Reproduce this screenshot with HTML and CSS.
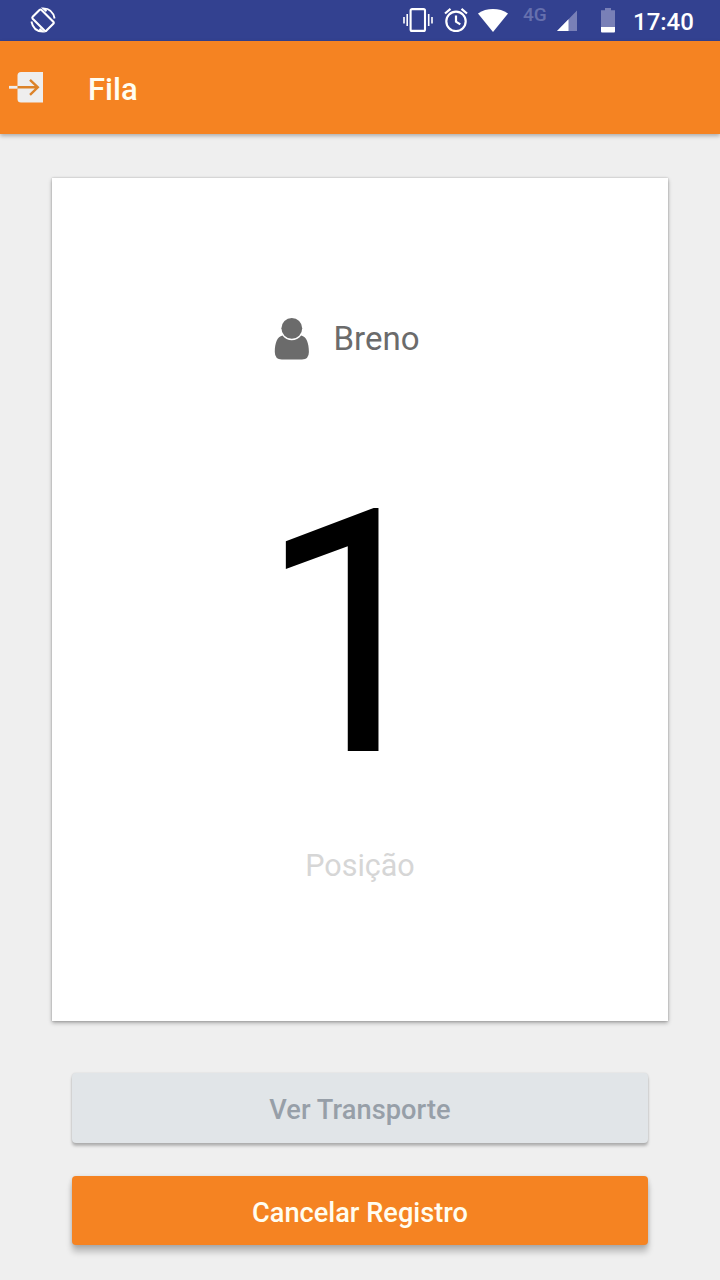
FILE: index.html
```html
<!DOCTYPE html>
<html lang="pt-BR">
<head>
<meta charset="utf-8">
<title>Fila</title>
<link rel="stylesheet" href="styles.css">
</head>
<body>
<div class="screen">
  <div class="status">
    <svg class="rotate" width="26" height="26" viewBox="0 0 26 26" fill="none" stroke="#fff" stroke-width="2.100">
      <path d="M2.700 9.800 9.500 3Q10.500 2 11.500 3L23.300 14.800Q24.300 15.800 23.300 16.800L16.500 23.600Q15.500 24.500 14.500 23.500L2.700 11.800Q1.800 10.800 2.700 9.800Z"/>
      <path stroke-width="1.900" d="M16.500 4.300 13.300 1.400Q22.500 1.500 24.600 11.500M9.500 21.700 12.700 24.600Q3.500 24.500 1.400 14.500"/>
    </svg>
    <div class="status-icons">
      <svg width="30" height="26" viewBox="0 0 30 26" fill="none" stroke="#fff">
        <rect x="7.600" y="2.100" width="14.400" height="21.800" rx="1.500" stroke-width="2.100"/>
        <path stroke-width="1.600" d="M4.200 7V19M1 10V16.500M25.700 7V19M29 10V16.500"/>
      </svg>
      <svg class="alarm" width="26" height="26" viewBox="0 0 26 26" fill="none" stroke="#fff" stroke-width="2.200">
        <circle cx="13" cy="14.300" r="9.700"/>
        <path d="M13 8.500V14.700L17.300 17.400M2 6.500 7.500 1.900M18.500 1.900 24 6.500"/>
      </svg>
      <svg class="wifi" width="32" height="26" viewBox="0 0 32 26"><path fill="#fff" d="M1 6.500C9.500 .6 22.500 .6 31 6.500L16 25Z"/></svg>
      <span class="network">4G</span>
      <svg class="signal" width="21" height="26" viewBox="0 0 21 26"><path fill="#7980b7" d="M20 3.500V24H0Z"/><path fill="#fff" d="M11.500 12.300V24H0Z"/></svg>
      <svg class="battery" width="14" height="26" viewBox="0 0 14 26"><path fill="#7980b7" d="M4 1H10V3.200H14V20H0V3.200H4Z"/><path fill="#fff" d="M0 20H14V24.500Q14 25.500 13 25.500H1Q0 25.500 0 24.500Z"/></svg>
      <span class="clock">17:40</span>
    </div>
  </div>
  <header class="bar">
    <svg class="exit" width="36" height="32" viewBox="0 0 36 32">
      <path fill="#eee" d="M12 1H34V31.500H12Q8.500 31.500 8.500 28V4.500Q8.500 1 12 1Z"/>
      <path d="M8 16.300H28.500M21 8.800 28.800 16.300 21 23.800" fill="none" stroke="#dc8329" stroke-width="2.400"/>
      <path d="M0 16.300H8.500" stroke="#eee" stroke-width="2.800"/>
    </svg>
    <h1 class="title">Fila</h1>
  </header>
  <main class="content">
    <section class="card">
      <div class="person">
        <svg width="36" height="44" viewBox="0 0 36 44" fill="#6b6b6b">
          <circle cx="17.800" cy="11.300" r="10.400"/>
          <path d="M8.500 18.400C12.500 24.700 23 24.700 27.200 18.400C32.500 19.500 34.900 26 34.900 35Q34.900 42.400 28 42.400H7.800Q.8 42.400 .8 35C.8 26 3.200 19.500 8.500 18.400Z"/>
        </svg>
        <span>Breno</span>
      </div>
      <div class="number">1</div>
      <div class="caption">Posição</div>
    </section>
    <button class="btn btn-view">Ver Transporte</button>
    <button class="btn btn-cancel">Cancelar Registro</button>
  </main>
</div>
</body>
</html>
```
FILE: styles.css
```css
* { box-sizing: border-box; }
body { margin: 0; font-family: Roboto, sans-serif; background: #efefef; }
svg { display: block; flex: none; }
.screen { height: 1280px; overflow: hidden; display: flex; flex-direction: column; }
.status {
  height: 41px; flex: none; background: #334190;
  display: flex; justify-content: space-between; align-items: flex-start;
  padding: 7px 26px 0 30px;
}
.status-icons { display: flex; align-items: flex-start; }
.alarm { margin-left: 10px; }
.wifi { margin-left: 8px; }
.network {
  width: 26px; margin: -2px 0 0 14px;
  font-size: 19px; line-height: 20px; font-weight: 500; color: #6670ae;
}
.signal { margin-left: 8px; }
.battery { margin-left: 23px; }
.clock {
  width: 61px; margin-left: 18px; padding-top: 1px;
  font-size: 24px; line-height: 28px; font-weight: 500; color: #fff;
}
.bar {
  height: 93px; flex: none; position: relative; background: #f58322;
  display: flex; align-items: center; gap: 43px; padding: 0 9px;
  box-shadow: 0 2px 4px rgba(0, 0, 0, .28);
}
.exit { margin-top: -2px; }
.title { margin: 4px 0 0; font-size: 31px; line-height: 40px; font-weight: 500; color: #fffdf0; }
.content { display: flex; flex-direction: column; padding: 44px 52px 0; }
.card {
  height: 843px; padding-top: 139px; background: #fff;
  display: flex; flex-direction: column; align-items: center;
  box-shadow: 0 2px 4px rgba(0, 0, 0, .3), 0 0 2px rgba(0, 0, 0, .22);
}
.person {
  width: 173px; height: 44px; display: flex; gap: 24px;
  font-size: 33px; line-height: 44px; color: #6b6b6b;
}
.number { margin-top: 144px; padding-right: 14px; font-size: 340px; line-height: 260px; color: #000; }
.caption { margin-top: 81px; font-size: 30.5px; line-height: 40px; color: #d6d6d6; }
.btn {
  height: 70px; margin: 0 20px; padding: 3px 0 0; border: 0; border-radius: 4px;
  font: 500 27.2px/36px Roboto, sans-serif;
}
.btn-view {
  margin-top: 52px; background: #e1e5e8; color: #979fa8; letter-spacing: .08px;
  box-shadow: 0 3px 3px rgba(0, 0, 0, .25), 0 0 2px rgba(0, 0, 0, .12);
}
.btn-cancel {
  height: 69px; margin-top: 33px; padding-top: 5px; background: #f58322; color: #fffdf0;
  box-shadow: 0 7px 6px rgba(0, 0, 0, .22), 0 1px 4px rgba(0, 0, 0, .15);
}
```
